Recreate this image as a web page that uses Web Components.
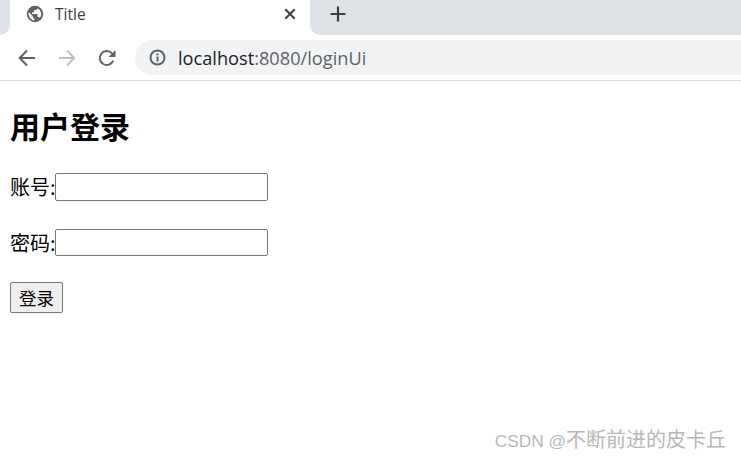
<!DOCTYPE html>
<html lang="zh-CN">
<head>
<meta charset="utf-8">
<title>Title</title>
<style>
html,body{margin:0;height:100%;background:#fff;overflow:hidden}
body{font-family:"Noto Sans CJK SC","Liberation Sans",sans-serif;position:relative;width:741px;height:459px}
</style>
</head>
<body>
<browser-tabs></browser-tabs>
<browser-toolbar url-host="localhost" url-path=":8080/loginUi"></browser-toolbar>
<login-page>
  <login-field label="账号:" h="28"></login-field>
  <login-field label="密码:" h="27"></login-field>
</login-page>
<csdn-mark>不断前进的皮卡丘</csdn-mark>
<script>
class BrowserTabs extends HTMLElement{
  constructor(){super();this.attachShadow({mode:'open'}).innerHTML=`
  <style>
  :host{display:flex;height:35px;background:#fff}
  .l{width:10px;background:#dee1e6;border-bottom-right-radius:10px}
  .tab{width:300px;box-sizing:border-box;display:flex;align-items:center;padding:0 13px 7px 16px;background:#fff}
  .t{flex:1;margin-left:11px;font:15.500px "Open Sans","Noto Sans",sans-serif;color:#3c4043}
  .r{flex:1;background:#dee1e6;border-bottom-left-radius:10px;display:flex;padding:0 0 0 20px;align-items:flex-start}
  svg{display:block}
  .g{margin-top:6px}
  </style>
  <div class="l"></div>
  <div class="tab">
    <svg width="18" height="18" viewBox="0 0 24 24"><path fill="#5f6368" d="M12 1a11 11 0 1 0 0 22 11 11 0 0 0 0-22zM3.400 12c0-.9.1-1.700.4-2.500L9 14.600V16c0 1.200 1 2.100 2.100 2.100v2.400A8.600 8.600 0 0 1 3.400 12zm15 5.400c-.3-.8-1-1.400-2-1.400h-1v-3c0-.6-.5-1-1-1H8v-2h2c.6 0 1-.4 1-1V6.800h2c1.200 0 2.200-1 2.200-2.100v-.5a8.600 8.600 0 0 1 3.200 13.200z"/></svg>
    <span class="t">Title</span>
    <svg width="14" height="14" viewBox="0 0 14 14"><path d="M2.300 2.300l9.400 9.400M11.700 2.300l-9.400 9.400" stroke="#3c4043" stroke-width="2" fill="none"/></svg>
  </div>
  <div class="r">
    <svg class="g" width="16" height="16" viewBox="0 0 16 16"><path d="M8 .5v15M.5 8h15" stroke="#3c4043" stroke-width="2.200" fill="none"/></svg>
  </div>`}
}
class BrowserToolbar extends HTMLElement{
  constructor(){super();this.attachShadow({mode:'open'}).innerHTML=`
  <style>
  :host{display:flex;box-sizing:border-box;height:46px;padding:5px 0 5px 18px;border-bottom:1px solid #dadce0;background:#fff;align-items:center}
  .navs{display:flex;gap:22px;align-items:center}
  svg{display:block;flex:none}
  .box{margin-left:19px;flex:1;height:35px;background:#f1f3f4;border-radius:18px 0 0 18px;display:flex;align-items:center;padding-left:14px}
  .u{margin-left:12px;font:18.200px "Open Sans","Noto Sans",sans-serif;color:#202124;white-space:nowrap}
  .u span{color:#5f6368}
  </style>
  <div class="navs">
    <svg width="18" height="18" viewBox="0 0 18 18"><path d="M17 9H2M9 1.500L1.700 9 9 16.500" stroke="#5f6368" stroke-width="2" fill="none"/></svg>
    <svg width="18" height="18" viewBox="0 0 18 18"><path d="M1 9h15M9 1.500L16.300 9 9 16.500" stroke="#bdc1c6" stroke-width="2" fill="none"/></svg>
    <svg width="18" height="18" viewBox="0 0 18 18"><path d="M15.300 11.500A7 7 0 1 1 14 4.300" stroke="#5f6368" stroke-width="2" fill="none"/><path d="M17.500 1v7h-7z" fill="#5f6368"/></svg>
  </div>
  <div class="box">
    <svg width="17" height="17" viewBox="0 0 17 17"><circle cx="8.500" cy="8.500" r="7" stroke="#5f6368" stroke-width="2" fill="none"/><path d="M8.500 7.500v5" stroke="#5f6368" stroke-width="2"/><path d="M8.500 4.300v2" stroke="#5f6368" stroke-width="2"/></svg>
    <div class="u">${this.getAttribute('url-host')}<span>${this.getAttribute('url-path')}</span></div>
  </div>`}
}
class LoginField extends HTMLElement{
  constructor(){super();const h=this.getAttribute('h');this.attachShadow({mode:'open'}).innerHTML=`
  <style>
  :host{display:flex;align-items:flex-start;font-size:20px;color:#000;line-height:28px}
  span{width:45px;white-space:nowrap}
  input{box-sizing:border-box;width:213px;height:${h}px;margin:0;border:1px solid #767676;border-radius:2px;background:#fff;padding:1px 2px}
  </style>
  <span>${this.getAttribute('label')}</span><input type="text">`}
}
class LoginPage extends HTMLElement{
  constructor(){super();this.attachShadow({mode:'open'}).innerHTML=`
  <style>
  :host{display:flex;flex-direction:column;align-items:flex-start;padding:22px 10px 0}
  h1{margin:0 0 26px;font-size:30px;line-height:44px;font-weight:700;color:#000}
  .fields{display:flex;flex-direction:column;gap:28px}
  button{margin-top:25px;box-sizing:border-box;width:53px;height:31px;padding:0;border:1px solid #767676;border-radius:2px;background:#efefef;color:#000;font:17.500px "Noto Sans CJK SC",sans-serif}
  </style>
  <h1>用户登录</h1>
  <div class="fields"><slot></slot></div>
  <button type="button">登录</button>`}
}
class CsdnMark extends HTMLElement{
  constructor(){super();this.attachShadow({mode:'open'}).innerHTML=`
  <style>
  :host{position:absolute;right:15px;top:426px;font:20px/26px "Noto Sans CJK SC",sans-serif;color:#b8b8b8;white-space:nowrap}
  .l{font:17.300px/26px "Liberation Sans",sans-serif}
  </style><span class="l">CSDN @</span><slot></slot>`}
}
customElements.define('browser-tabs',BrowserTabs);
customElements.define('browser-toolbar',BrowserToolbar);
customElements.define('login-field',LoginField);
customElements.define('login-page',LoginPage);
customElements.define('csdn-mark',CsdnMark);
</script>
</body>
</html>
